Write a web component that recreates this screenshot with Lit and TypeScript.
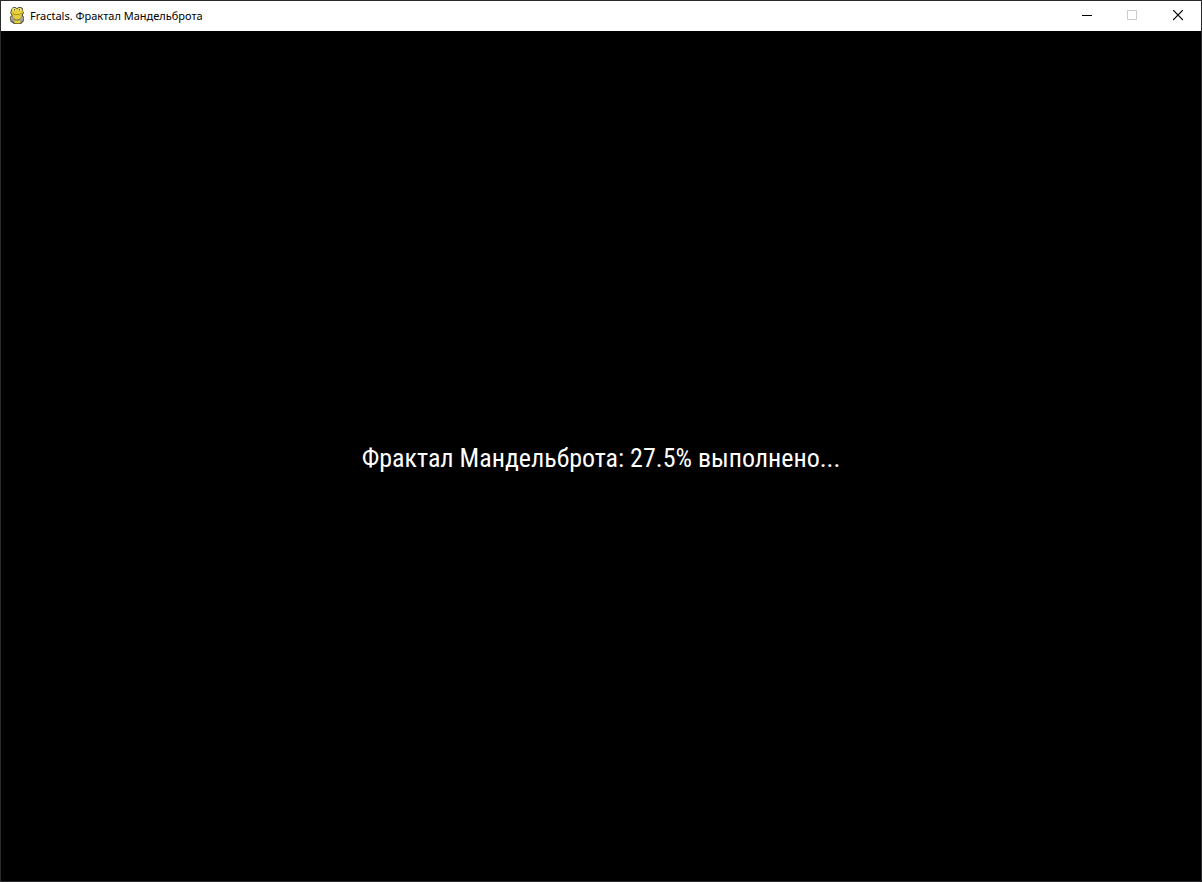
import { LitElement, html, css, svg } from "lit";
import { customElement, property } from "lit/decorators.js";

@customElement("snake-icon")
class SnakeIcon extends LitElement {
  static styles = css`
    :host { display: block; width: 16px; height: 18px; }
    svg { display: block; }
  `;
  render() {
    return html`<svg width="16" height="18" viewBox="0 0 16 18" aria-hidden="true">
      ${svg`
      <path d="M3 1L4.5 0H6.5L8 1.2L9.5 0H12L14 1.5V4L15 5.5L13.8 8.5L15 10V14L12 17H5L1.5 14.5L.8 10L2.6 8.5L1.2 6L2 3Z" fill="#57533a"/>
      <path d="M3.5 1H6.5L8 2.2L9.5 1H12L13.2 2.5L14 5.6L12.6 8.2L13 14L11 16.3H6L4 14L4 9L2.2 6L3 3Z" fill="#e6d238"/>
      <path d="M3.8 1.4H6.4V3.8H3.8ZM9.6 1.4H12V3.8H9.6Z" fill="#f3efc2"/>
      <path d="M5 2H6V3.4H5ZM10 2H11V3.4H10Z" fill="#55513b"/>
      <path d="M3.4 6.2L6 7.6H10.5L13 6" fill="none" stroke="#a08e22"/>
      <path d="M1.4 9.6L4.6 9.2L5.6 12V15L2.2 13.6ZM10.4 12L12.5 9L14.4 10.2V13.5L11 15Z" fill="#a3a193"/>
      <path d="M5 11.6L8 12.6L11 11.4V13L8 14L5 13Z" fill="#8b853f"/>`}
    </svg>`;
  }
}

@customElement("title-bar")
class TitleBar extends LitElement {
  @property() caption = "";
  static styles = css`
    :host {
      display: flex;
      align-items: center;
      height: 30px;
      background: #fff;
      color: #000;
      font: 11px/16px "Noto Sans", "Open Sans", sans-serif;
    }
    .caption {
      flex: 1;
      min-width: 0;
      margin: 0;
      padding-left: 5px;
      font: inherit;
      white-space: nowrap;
      overflow: hidden;
      text-overflow: ellipsis;
    }
    snake-icon { margin-left: 8px; }
    .controls { display: flex; height: 100%; }
    button {
      display: grid;
      place-items: center;
      width: 46px;
      height: 100%;
      padding: 0;
      border: 0;
      background: none;
      color: #000;
    }
    button:disabled { color: #ccc; }
    button:hover:enabled { background: #e5e5e5; }
    svg { display: block; }
  `;
  render() {
    return html`
      <snake-icon></snake-icon>
      <h1 class="caption">${this.caption}</h1>
      <div class="controls">
        <button type="button" aria-label="Свернуть">
          <svg width="12" height="12" viewBox="0 0 12 12"><path d="M2 5.5H12" stroke="currentColor"/></svg>
        </button>
        <button type="button" aria-label="Развернуть" disabled>
          <svg width="10" height="12" viewBox="0 0 10 12"><path d="M.5.5H9.5V9.5H.5Z" fill="none" stroke="currentColor"/></svg>
        </button>
        <button type="button" aria-label="Закрыть">
          <svg width="10" height="12" viewBox="0 0 10 12"><path d="M0 0L10 10M10 0L0 10" stroke="currentColor" stroke-width="1.2"/></svg>
        </button>
      </div>`;
  }
}

@customElement("app-root")
class AppRoot extends LitElement {
  @property() name = "Фрактал Мандельброта";
  @property({ type: Number }) progress = 27.5;
  static styles = css`
    :host {
      display: flex;
      flex-direction: column;
      box-sizing: border-box;
      min-height: 100vh;
      border: 1px solid #2b2b2d;
      background: #000;
    }
    .canvas {
      flex: 1;
      display: grid;
      place-items: center;
      color: #fff;
      font: 26px/32px "Roboto Condensed", "Arial Narrow", "Liberation Sans", sans-serif;
    }
    .status { margin: 0; padding-top: 4px; text-align: center; }
  `;
  render() {
    return html`
      <title-bar .caption=${`Fractals. ${this.name}`}></title-bar>
      <main class="canvas">
        <p class="status" role="status">${this.name}: ${this.progress}% выполнено...</p>
      </main>`;
  }
}
